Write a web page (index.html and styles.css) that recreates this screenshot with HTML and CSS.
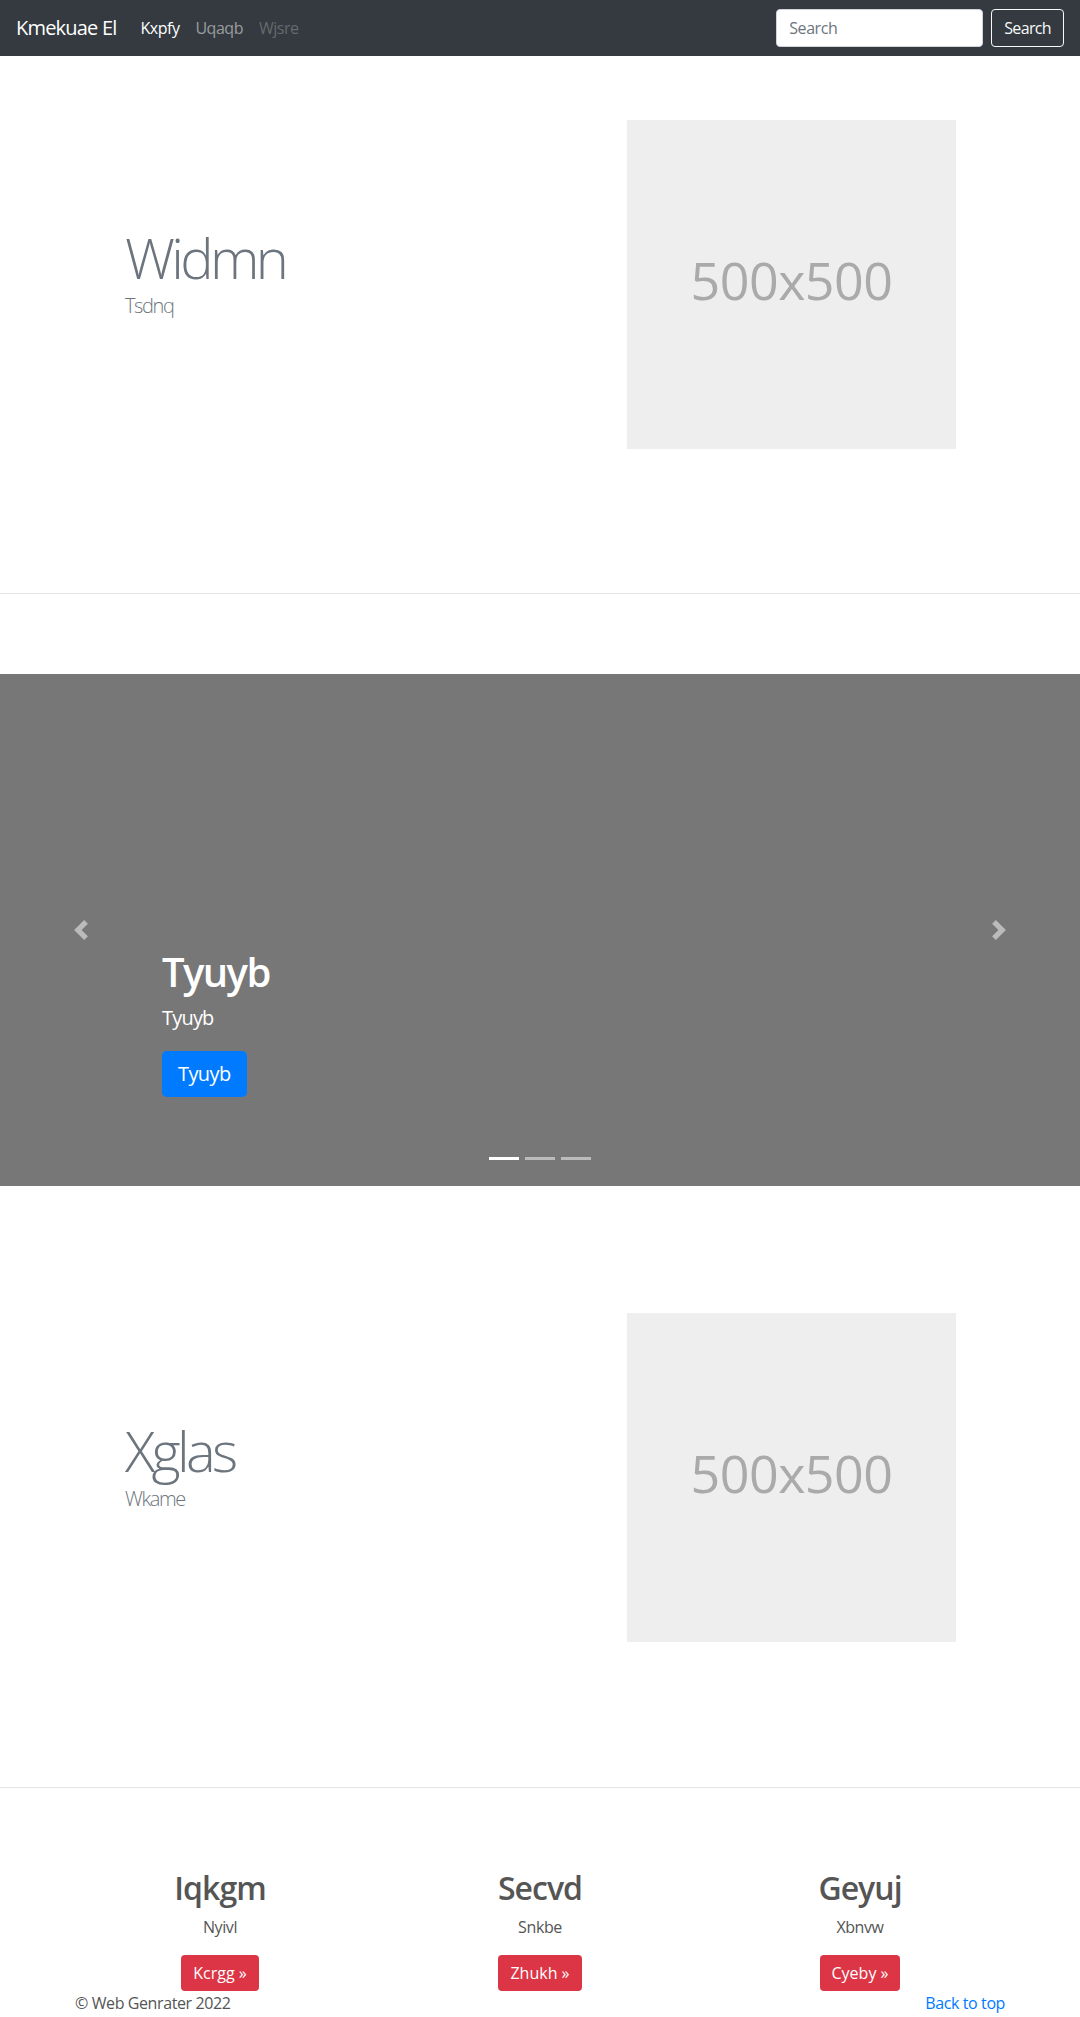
FILE: index.html
```
<!DOCTYPE html>
<html lang="en">
<head>
<meta charset="utf-8">
<title>Kmekuae El</title>
<link rel="stylesheet" href="styles.css">
</head>
<body>
<nav class="navbar">
  <a class="brand" href="#">Kmekuae El</a>
  <ul class="nav-links">
    <li><a class="nav-link active" href="#">Kxpfy</a></li>
    <li><a class="nav-link" href="#">Uqaqb</a></li>
    <li><a class="nav-link disabled" href="#">Wjsre</a></li>
  </ul>
  <form class="search">
    <input class="search-input" type="text" placeholder="Search">
    <button class="search-btn" type="button">Search</button>
  </form>
</nav>

<section class="feature feature-first">
  <div class="feature-text">
    <h1 class="feature-title">Widmn</h1>
    <p class="feature-lead">Tsdnq</p>
  </div>
  <div class="placeholder"><span class="placeholder-label">500x500</span></div>
</section>

<div class="carousel">
  <ol class="indicators">
    <li class="indicator active"></li>
    <li class="indicator"></li>
    <li class="indicator"></li>
  </ol>
  <div class="caption">
    <h2 class="caption-title">Tyuyb</h2>
    <p class="caption-text">Tyuyb</p>
    <p class="caption-action"><a class="btn-primary" href="#">Tyuyb</a></p>
  </div>
  <a class="control control-prev" href="#">
    <svg class="control-icon" viewBox="0 0 8 8" width="20" height="20"><path d="M5.25 0l-4 4 4 4 1.5-1.5L4.25 4l2.5-2.5L5.25 0z"/></svg>
  </a>
  <a class="control control-next" href="#">
    <svg class="control-icon" viewBox="0 0 8 8" width="20" height="20"><path d="M2.75 0l-1.5 1.5L3.75 4l-2.5 2.5L2.75 8l4-4-4-4z"/></svg>
  </a>
</div>

<section class="feature feature-second">
  <div class="feature-text">
    <h1 class="feature-title">Xglas</h1>
    <p class="feature-lead">Wkame</p>
  </div>
  <div class="placeholder"><span class="placeholder-label">500x500</span></div>
</section>

<section class="marketing">
  <div class="col">
    <h2 class="col-title">Iqkgm</h2>
    <p class="col-text">Nyivl</p>
    <p class="col-action"><a class="btn-danger" href="#">Kcrgg &raquo;</a></p>
  </div>
  <div class="col">
    <h2 class="col-title">Secvd</h2>
    <p class="col-text">Snkbe</p>
    <p class="col-action"><a class="btn-danger" href="#">Zhukh &raquo;</a></p>
  </div>
  <div class="col">
    <h2 class="col-title">Geyuj</h2>
    <p class="col-text">Xbnvw</p>
    <p class="col-action"><a class="btn-danger" href="#">Cyeby &raquo;</a></p>
  </div>
</section>

<footer class="footer">
  <p class="copyright">&copy; Web Genrater 2022</p>
  <p class="back-top"><a href="#">Back to top</a></p>
</footer>
</body>
</html>
```

FILE: styles.css
```
* { box-sizing: border-box; }

body {
  margin: 0;
  font-family: "Open Sans", "Noto Sans", sans-serif;
  font-size: 16px;
  line-height: 1.5;
  letter-spacing: -0.025em;
  color: #212529;
  background: #fff;
}

/* navbar */
.navbar {
  display: flex;
  align-items: center;
  height: 56px;
  padding: 0 16px;
  background: #343a40;
}
.brand {
  font-size: 20px;
  line-height: 30px;
  padding: 5px 0;
  margin-right: 16px;
  letter-spacing: -0.04em;
  color: #fff;
  text-decoration: none;
}
.nav-links {
  display: flex;
  flex: 1;
  list-style: none;
  margin: 0;
  padding: 0;
}
.nav-link {
  display: block;
  padding: 8px;
  letter-spacing: -0.03em;
  color: rgba(255,255,255,.5);
  text-decoration: none;
}
.nav-link.active { color: #fff; }
.nav-link.disabled { color: rgba(255,255,255,.25); }
.search {
  display: flex;
  align-items: center;
  margin: 0;
}
.search-input {
  width: 207px;
  height: 38px;
  padding: 6px 12px;
  font: inherit;
  letter-spacing: inherit;
  color: #495057;
  background: #fff;
  border: 1px solid #ced4da;
  border-radius: 4px;
  margin-right: 8px;
}
.search-input::placeholder { color: #6c757d; }
.search-btn {
  height: 38px;
  padding: 6px 12px;
  font: inherit;
  letter-spacing: -0.04em;
  color: #f8f9fa;
  background: transparent;
  border: 1px solid #f8f9fa;
  border-radius: 4px;
}

/* featurettes */
.feature {
  display: flex;
  align-items: center;
  padding-left: 125px;
  padding-right: 124px;
  border-bottom: 1px solid rgba(0,0,0,.1);
}
.feature-first {
  padding-top: 64px;
  padding-bottom: 144px;
}
.feature-second {
  padding-top: 127px;
  padding-bottom: 145px;
}
.feature-text { flex: 1; }
.feature-title {
  margin: 0;
  font-size: 56px;
  font-weight: 300;
  line-height: 1.2;
  letter-spacing: -0.065em;
  color: #6c757d;
}
.feature-lead {
  margin: 0 0 24px;
  font-size: 20px;
  font-weight: 300;
  line-height: 1.5;
  letter-spacing: -0.07em;
  color: #6c757d;
}
.placeholder {
  display: flex;
  align-items: center;
  justify-content: center;
  width: 329px;
  height: 329px;
  padding-bottom: 10px;
  background: #eee;
}
.placeholder-label {
  color: #aaa;
  font-size: 52px;
  letter-spacing: -0.01em;
}

/* carousel */
.carousel {
  position: relative;
  height: 512px;
  margin-top: 80px;
  background: #777;
}
.indicators {
  position: absolute;
  left: 0;
  right: 0;
  bottom: 0;
  display: flex;
  justify-content: center;
  list-style: none;
  margin: 0 0 16px;
  padding: 0;
}
.indicator {
  width: 30px;
  height: 23px;
  margin: 0 3px;
  border-top: 10px solid transparent;
  border-bottom: 10px solid transparent;
  background: rgba(255,255,255,.5);
  background-clip: padding-box;
}
.indicator.active { background-color: #fff; }
.caption {
  position: absolute;
  left: 15%;
  right: 15%;
  bottom: 53px;
  padding: 20px 0;
  color: #fff;
}
.caption-title {
  margin: 0 0 7px;
  font-size: 40px;
  font-weight: 600;
  line-height: 1.2;
  letter-spacing: -0.04em;
}
.caption-text {
  margin: 0 0 18px;
  font-size: 20px;
  line-height: 1.5;
  letter-spacing: -0.04em;
}
.caption-action { margin: 0 0 16px; }
.btn-primary {
  display: inline-block;
  padding: 8px 16px;
  font-size: 20px;
  line-height: 1.5;
  letter-spacing: -0.03em;
  color: #fff;
  background: #007bff;
  border-radius: 4.8px;
  text-decoration: none;
}
.control {
  position: absolute;
  top: 0;
  bottom: 0;
  width: 15%;
  display: flex;
  align-items: center;
  justify-content: center;
  opacity: .5;
}
.control-prev { left: 0; }
.control-next { right: 0; }
.control-icon { fill: #fff; }

/* marketing */
.marketing {
  display: grid;
  grid-template-columns: repeat(3, 1fr);
  width: 960px;
  margin: 0 auto;
  padding-top: 81px;
  text-align: center;
  color: #555;
}
.col { padding: 0 15px; }
.col-title {
  margin: 0 0 8px;
  font-size: 32px;
  font-weight: 600;
  line-height: 1.2;
  letter-spacing: -0.03em;
}
.col-text { margin: 0 0 16px; }
.col-action { margin: 0; }
.btn-danger {
  display: inline-block;
  padding: 6px 12px;
  line-height: 1.5;
  letter-spacing: 0;
  color: #fff;
  background: #dc3545;
  border-radius: 4px;
  text-decoration: none;
}

/* footer */
.footer {
  display: flex;
  justify-content: space-between;
  width: 930px;
  margin: 0 auto;
  color: #555;
}
.copyright, .back-top { margin: 0 0 16px; }
.back-top a { color: #007bff; text-decoration: none; }
```
